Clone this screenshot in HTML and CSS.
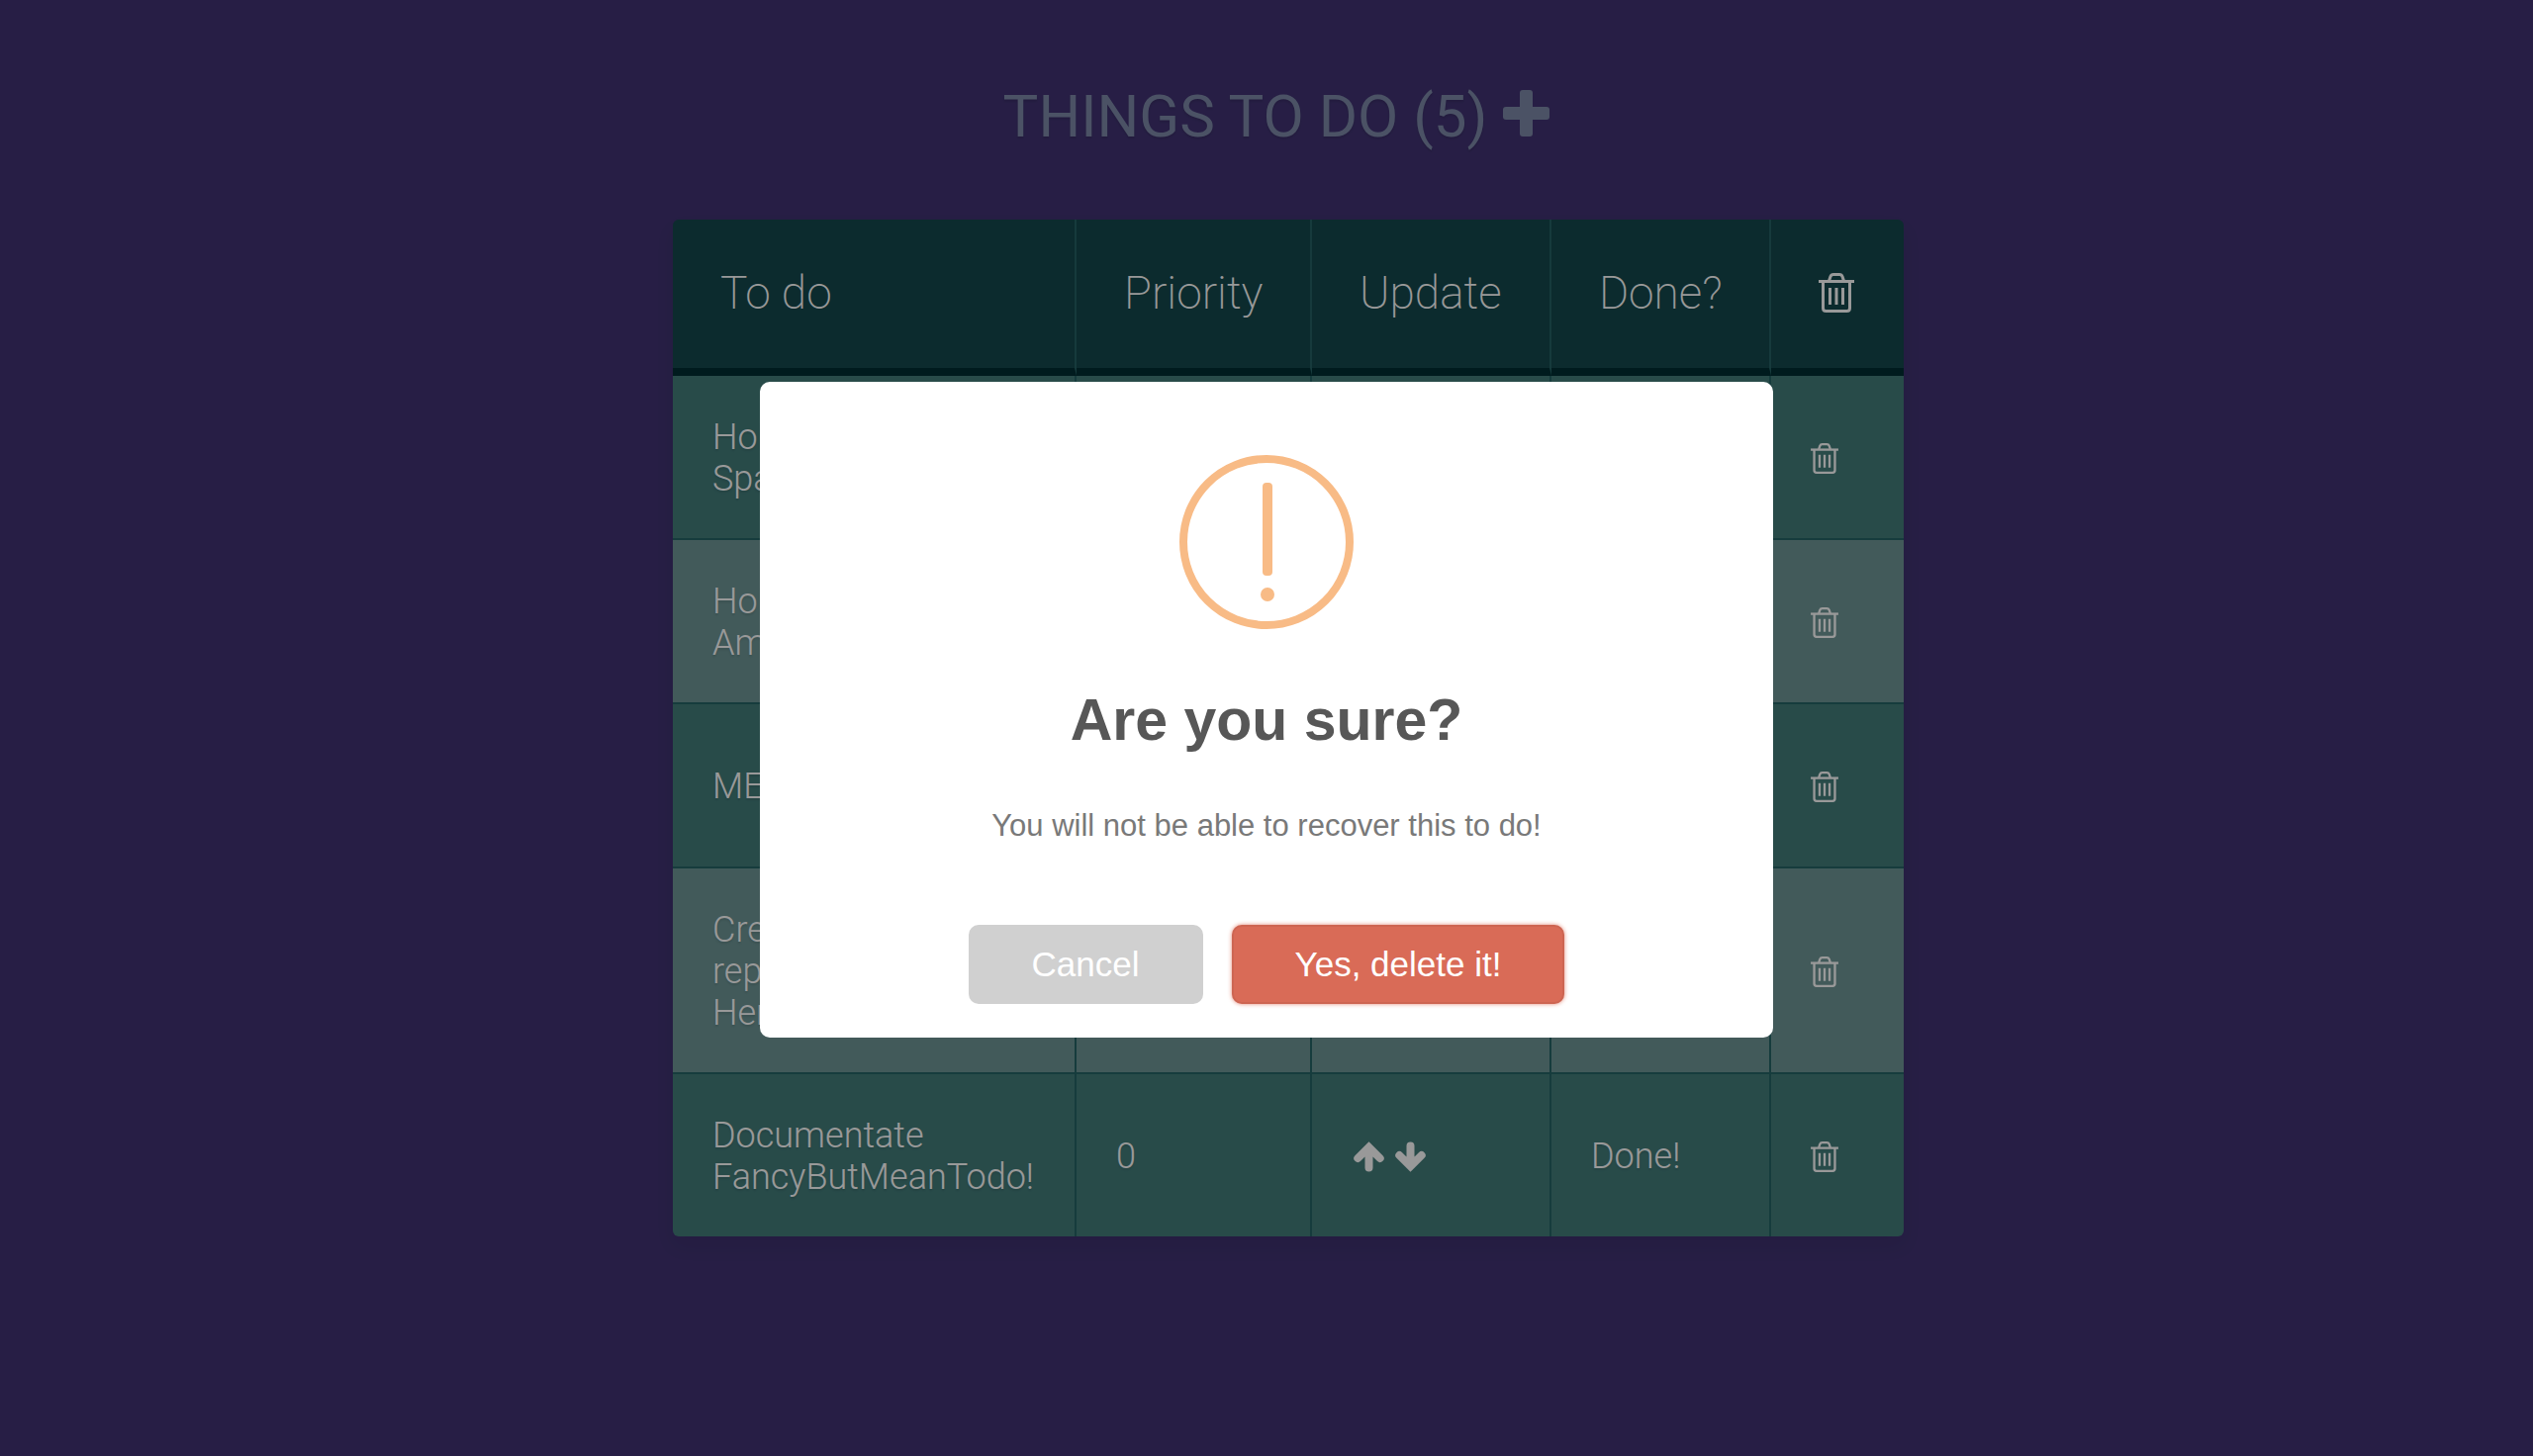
FILE: index.html
```html
<!DOCTYPE html>
<html lang="en">
<head>
<meta charset="utf-8">
<meta name="viewport" content="width=device-width, initial-scale=1">
<title>Things to do</title>
<link rel="stylesheet" href="styles.css">
</head>
<body>
<svg class="sprite" aria-hidden="true">
  <symbol id="trash" viewBox="0 0 36 40">
    <path d="M0 7h36v3H0z" fill="currentColor"/>
    <path d="M10.500 8L12 3.500Q12.700 1.500 15 1.500h6q2.300 0 3 2L25.500 8M4.500 9v26.500q0 3 3 3h21q3 0 3-3V9M11.500 15v17M18 15v17M24.500 15v17" fill="none" stroke="currentColor" stroke-width="3"/>
  </symbol>
  <symbol id="up" viewBox="0 0 31 31">
    <path d="M4.300 17L15.500 5.800 26.700 17M15.500 7v19.500" fill="none" stroke="currentColor" stroke-width="8" stroke-linecap="round"/>
  </symbol>
  <symbol id="down" viewBox="0 0 31 31">
    <path d="M4.300 14L15.500 25.200 26.700 14M15.500 24V4.500" fill="none" stroke="currentColor" stroke-width="8" stroke-linecap="round"/>
  </symbol>
</svg>

<main class="page">
  <h1 class="title">Things to do (5)
    <button class="icon-button" aria-label="Add a to do"><svg class="plus" viewBox="0 0 47 47"><rect x="17" width="13" height="47" rx="3" fill="currentColor"/><rect y="17" width="47" height="13" rx="3" fill="currentColor"/></svg></button>
  </h1>

  <table class="todos">
    <colgroup><col class="col-todo"><col class="col-priority"><col class="col-update"><col class="col-done"><col class="col-delete"></colgroup>
    <thead>
      <tr>
        <th scope="col">To do</th>
        <th scope="col">Priority</th>
        <th scope="col">Update</th>
        <th scope="col">Done?</th>
        <th scope="col" aria-label="Delete"><svg class="trash trash-large"><use href="#trash"/></svg></th>
      </tr>
    </thead>
    <tbody>
      <tr>
        <td>Holidays<br>Spain</td><td></td><td></td><td></td>
        <td><button class="icon-button" aria-label="Delete"><svg class="trash"><use href="#trash"/></svg></button></td>
      </tr>
      <tr>
        <td>Holidays<br>America</td><td></td><td></td><td></td>
        <td><button class="icon-button" aria-label="Delete"><svg class="trash"><use href="#trash"/></svg></button></td>
      </tr>
      <tr>
        <td>MEAN</td><td></td><td></td><td></td>
        <td><button class="icon-button" aria-label="Delete"><svg class="trash"><use href="#trash"/></svg></button></td>
      </tr>
      <tr>
        <td>Create<br>repository<br>Heroku</td><td></td><td></td><td></td>
        <td><button class="icon-button" aria-label="Delete"><svg class="trash"><use href="#trash"/></svg></button></td>
      </tr>
      <tr>
        <td>Documentate FancyButMeanTodo!</td>
        <td>0</td>
        <td><div class="arrows"><button class="icon-button" aria-label="Raise priority"><svg class="arrow"><use href="#up"/></svg></button><button class="icon-button" aria-label="Lower priority"><svg class="arrow"><use href="#down"/></svg></button></div></td>
        <td>Done!</td>
        <td><button class="icon-button" aria-label="Delete"><svg class="trash"><use href="#trash"/></svg></button></td>
      </tr>
    </tbody>
  </table>
</main>

<div class="overlay"></div>
<div class="alert" role="alertdialog" aria-modal="true" aria-labelledby="alert-title" aria-describedby="alert-text">
  <svg class="alert-icon" viewBox="0 0 176 176" aria-hidden="true">
    <circle cx="88" cy="88" r="84" fill="none" stroke="currentColor" stroke-width="8"/>
    <rect x="84" y="28" width="10" height="94" rx="4" fill="currentColor"/>
    <circle cx="89" cy="141" r="7" fill="currentColor"/>
  </svg>
  <h2 class="alert-title" id="alert-title">Are you sure?</h2>
  <p class="alert-text" id="alert-text">You will not be able to recover this to do!</p>
  <div class="alert-actions">
    <button class="alert-button cancel">Cancel</button>
    <button class="alert-button confirm">Yes, delete it!</button>
  </div>
</div>
</body>
</html>
```
FILE: styles.css
```css
* {
  box-sizing: border-box;
}

body {
  margin: 0;
  min-height: 100vh;
  background: #413373;
  color: #fff;
  font-family: Roboto, "Liberation Sans", sans-serif;
}

.sprite {
  position: absolute;
  width: 0;
  height: 0;
}

.page {
  max-width: 1200px;
  margin: 0 auto;
  padding: 83px 0;
}

.title {
  display: flex;
  justify-content: center;
  align-items: baseline;
  gap: 16px;
  margin: 0 0 69px;
  padding-left: 20px;
  color: #7d89a8;
  font-size: 60px;
  font-weight: 400;
  line-height: 70px;
  text-transform: uppercase;
  text-shadow: 0 2px 2px rgba(0, 0, 0, .1);
}

.icon-button {
  display: block;
  padding: 0;
  border: 0;
  background: none;
  color: inherit;
  cursor: pointer;
}

.icon-button svg {
  display: block;
}

.plus {
  width: 47px;
  height: 47px;
}

.todos {
  width: 1244px;
  table-layout: fixed;
  border-collapse: separate;
  border-spacing: 0;
  border-radius: 6px;
  overflow: hidden;
  box-shadow: 0 10px 20px rgba(0, 0, 0, .06);
}

.col-todo { width: 408px; }
.col-priority { width: 238px; }
.col-update { width: 242px; }
.col-done { width: 222px; }
.col-delete { width: 134px; }

th {
  padding: 47px 48px 49px;
  background: #14494d;
  border-right: 2px solid #256164;
  border-bottom: 8px solid #002d32;
  font-size: 46px;
  font-weight: 200;
  line-height: 54px;
  text-align: left;
}

td {
  height: 166px;
  padding: 41px 40px 39px;
  background: #437d7b;
  border-right: 2px solid #266466;
  border-bottom: 2px solid #266466;
  font-size: 36px;
  font-weight: 300;
  line-height: 42px;
  text-shadow: 0 2px 2px rgba(0, 0, 0, .1);
}

tr:nth-child(even) td {
  background: #6e9696;
}

th:last-child,
td:last-child {
  border-right: 0;
}

tbody tr:last-child td {
  height: 164px;
  border-bottom: 0;
}

.trash {
  display: block;
  width: 28px;
  height: 31px;
}

.trash-large {
  width: 36px;
  height: 40px;
}

.arrows {
  display: flex;
  gap: 11px;
  padding-left: 2px;
}

.arrow {
  width: 31px;
  height: 31px;
}

.overlay {
  position: fixed;
  inset: 0;
  background: rgba(0, 0, 0, .4);
}

.alert {
  position: fixed;
  top: 50%;
  left: 50%;
  width: 1024px;
  margin: -350px 0 0 -512px;
  padding: 34px;
  border-radius: 10px;
  background: #fff;
  font-family: "Liberation Sans", Arial, sans-serif;
  text-align: center;
}

.alert-icon {
  display: block;
  width: 176px;
  height: 176px;
  margin: 40px auto 52px;
  color: #f8bb86;
}

.alert-title {
  margin: 0 0 47px;
  color: #575757;
  font-size: 59px;
  font-weight: 700;
  line-height: 80px;
}

.alert-text {
  margin: 0;
  color: #797979;
  font-size: 31px;
  font-weight: 300;
  line-height: 40px;
}

.alert-actions {
  display: flex;
  justify-content: center;
  gap: 29px;
  margin-top: 80px;
}

.alert-button {
  height: 80px;
  padding: 0 64px;
  border: 0;
  border-radius: 10px;
  color: #fff;
  font-family: inherit;
  font-size: 35px;
  cursor: pointer;
}

.cancel {
  background: #d0d0d0;
}

.confirm {
  background: #d96b57;
  box-shadow: 0 0 4px rgba(221, 107, 85, .8), inset 0 0 0 2px rgba(0, 0, 0, .05);
}
```
